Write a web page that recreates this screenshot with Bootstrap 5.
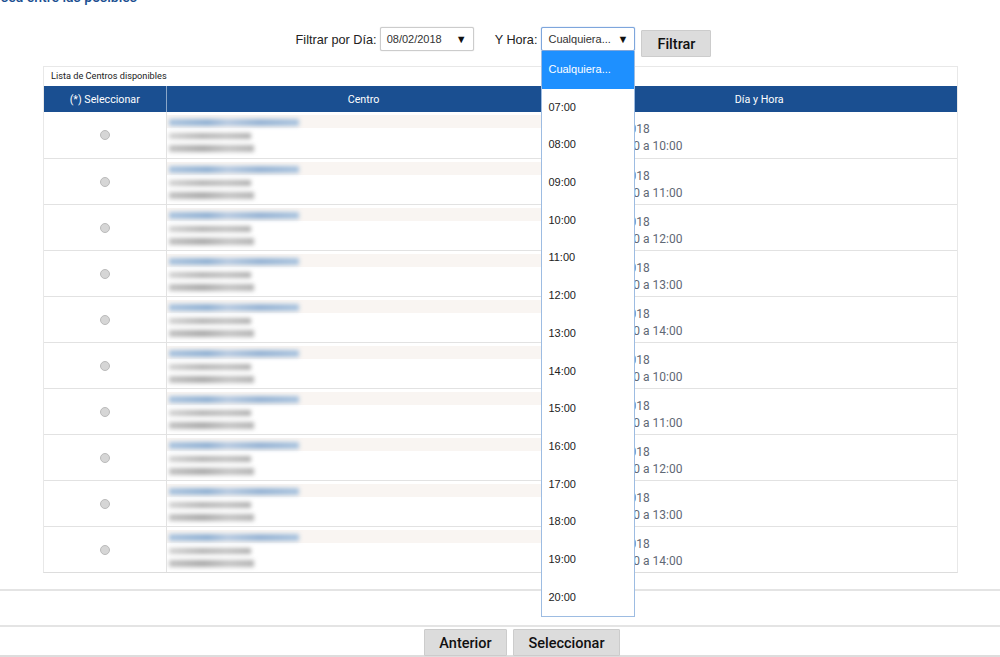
<!DOCTYPE html>
<html lang="es">
<head>
  <meta charset="UTF-8">
  <title>Lista de Centros</title>
  <link href="https://cdn.jsdelivr.net/npm/bootstrap@5.3.0/dist/css/bootstrap.min.css" rel="stylesheet">
  <style>
    body { font-family: Roboto, "Liberation Sans", sans-serif; color: #222; height: 657px; overflow: hidden; background: #fff; }
    .top-note { width: 137px; height: 5px; overflow: hidden; display: flex; justify-content: flex-end; align-items: flex-end; white-space: nowrap; color: #1b4f91; font-weight: 500; font-size: 14px; line-height: 5px; }
    .top-note span { display: block; margin-bottom: 5px; }
    .filter-bar { height: 61px; padding-top: 22px; padding-left: 7px; }
    .filter-label { font-family: "Liberation Sans", Arial, sans-serif; font-size: 12.7px; line-height: 26px; }
    .gap-date { margin-left: 3px; margin-right: 21px; }
    .gap-hour { margin-left: 4px; margin-right: 6px; }
    .fake-select { width: 94px; height: 24px; border: 1px solid #ccc; border-radius: 2px; background: #fff; box-shadow: 0 0 1px #bbb; font-family: "Liberation Sans", Arial, sans-serif; font-size: 11px; line-height: 22px; padding: 0 6px 0 6px; display: flex; justify-content: space-between; color: #333; }
    .fake-select .arrow { color: #111; font-size: 11px; }
    .fake-select.is-open { border-color: #7ea6dc; box-shadow: 0 0 1px #5b93dc; }
    .hour-wrap { position: relative; }
    .hour-menu { position: absolute; top: 24px; left: 0; width: 94px; margin: 0; padding: 0; border: 1px solid #9dbce2; border-top: 0; border-radius: 0; min-width: 0; display: block; background: #fff; z-index: 5; }
    .hour-menu .dropdown-item { height: 37.7px; line-height: 37.7px; padding: 0 6px; font-family: "Liberation Sans", Arial, sans-serif; font-size: 11px; color: #222; }
    .hour-menu .dropdown-item.active { background: #1e90ff; color: #fff; }
    .grey-btn { background: #dcdcdc; border: 1px solid #ccc; border-radius: 1px; color: #111; font-size: 14.5px; font-weight: 500; padding: 0; height: 27px; line-height: 27px; }
    .btn-filter { width: 70px; margin-top: 3px; }
    .centros { margin: 0 42px 0 43px; width: 915px; border: 1px solid #e8e8e8; border-bottom-color: #ddd; }
    .centros-title { height: 19px; line-height: 18px; font-size: 9.2px; padding-left: 7px; color: #222; }
    .centros-table { table-layout: fixed; width: 100%; margin: 0; font-size: 12px; }
    .centros-table th { background: #1a4f91; color: #fff; font-size: 10.7px; font-weight: 400; text-align: center; height: 26px; padding: 2px 0 0; vertical-align: middle; border: 0; border-left: 1px solid #8aa6c8; }
    .centros-table th:first-child { border-left: 0; }
    .centros-table td { height: 46px; padding: 0; border: 0; border-bottom: 1px solid #e2e2e2; vertical-align: top; }
    .centros-table tr:last-child td { border-bottom: 0; }
    .col-radio { width: 122px; }
    .centros-table td.cell-radio { text-align: center; padding-top: 15px; }
    .centros-table td.cell-centro { border-left: 1px solid #e2e2e2; }
    .radio-dot { appearance: none; display: inline-block; width: 10px; height: 10px; border-radius: 50%; border: 1px solid #bbb; background: #d6d6d6; margin: 0; }
    .blur-lines { position: relative; height: 45px; overflow: hidden; }
    .band { height: 13px; margin-top: 3px; background: #f9f5f2; }
    .smudge { position: absolute; left: 2px; filter: blur(2px); }
    .smudge-a { top: 7px; width: 130px; height: 7px; background: linear-gradient(90deg, #a9c3de, #8fb0d2 30%, #b5c9e0 45%, #93b2d3 70%, #a9c3de); }
    .smudge-b { top: 21px; width: 82px; height: 6px; background: linear-gradient(90deg, #d2d2d2, #b4b4b4 40%, #c0c0c0 70%, #b0b0b0); }
    .smudge-c { top: 33px; width: 85px; height: 7px; background: linear-gradient(90deg, #c2c2c2, #aaaaaa 40%, #c4c4c4 70%, #b4b4b4); }
    .centros-table td.cell-dia { color: #5f6875; padding-left: 25px; line-height: 17px; padding-top: 9px; }
    .hora-line { margin-left: 7px; }
    .rule { border-top: 2px solid #e4e4e4; }
    .rule-a { margin-top: 16px; }
    .rule-b { margin-top: 34px; height: 32px; padding-top: 2px; padding-left: 44px; gap: 6px; border-bottom: 2px solid #ddd; }
    .btn-prev { width: 83px; }
    .btn-next { width: 107px; }
  </style>
</head>
<body>
  <div class="top-note"><span>Seleccione el centro que sea entre las posibles</span></div>

  <div class="filter-bar d-flex justify-content-center align-items-start">
    <span class="filter-label">Filtrar por Día:</span>
    <div class="fake-select gap-date"><span>08/02/2018</span><span class="arrow">▼</span></div>
    <span class="filter-label">Y Hora:</span>
    <div class="hour-wrap gap-hour">
      <div class="fake-select is-open"><span>Cualquiera...</span><span class="arrow">▼</span></div>
      <ul class="hour-menu dropdown-menu list-unstyled" id="hours"></ul>
    </div>
    <button class="btn grey-btn btn-filter">Filtrar</button>
  </div>

  <div class="centros">
    <div class="centros-title">Lista de Centros disponibles</div>
    <table class="table centros-table">
      <colgroup><col class="col-radio"><col><col style="width: 396px"></colgroup>
      <thead><tr><th>(*) Seleccionar</th><th>Centro</th><th>Día y Hora</th></tr></thead>
      <tbody id="rows"></tbody>
    </table>
  </div>

  <div class="rule rule-a"></div>
  <div class="rule rule-b d-flex justify-content-center">
    <button class="btn grey-btn btn-prev">Anterior</button>
    <button class="btn grey-btn btn-next">Seleccionar</button>
  </div>

  <script>
    const hours = ["Cualquiera...", "07:00", "08:00", "09:00", "10:00", "11:00", "12:00", "13:00", "14:00", "15:00", "16:00", "17:00", "18:00", "19:00", "20:00"];
    document.getElementById("hours").innerHTML = hours.map((h, i) =>
      `<li><span class="dropdown-item${i === 0 ? " active" : ""}">${h}</span></li>`).join("");

    const slots = ["09:00 a 10:00", "10:00 a 11:00", "11:00 a 12:00", "12:00 a 13:00", "13:00 a 14:00"];
    document.getElementById("rows").innerHTML = [...slots, ...slots].map(s => `
      <tr>
        <td class="cell-radio"><input type="radio" class="radio-dot" name="centro"></td>
        <td class="cell-centro"><div class="blur-lines"><div class="band"></div><div class="smudge smudge-a"></div><div class="smudge smudge-b"></div><div class="smudge smudge-c"></div></div></td>
        <td class="cell-dia">08/02/2018<br><span class="hora-line">De ${s}</span></td>
      </tr>`).join("");
  </script>
  <script src="https://cdn.jsdelivr.net/npm/bootstrap@5.3.0/dist/js/bootstrap.bundle.min.js"></script>
</body>
</html>
